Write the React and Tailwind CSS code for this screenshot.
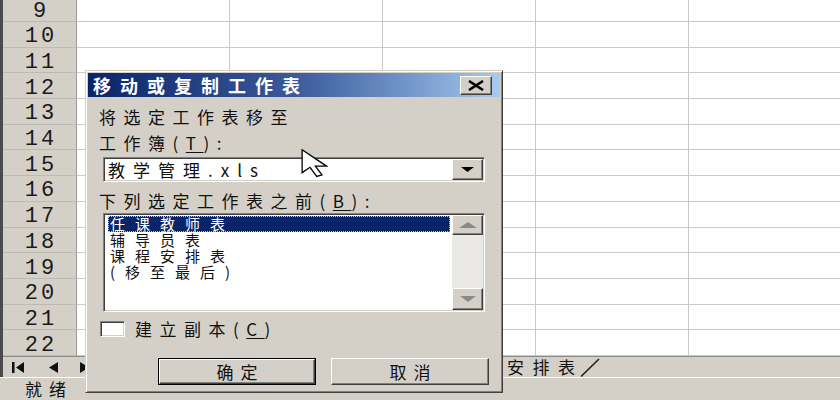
import React from 'react';

const rows = [9, 10, 11, 12, 13, 14, 15, 16, 17, 18, 19, 20, 21, 22];
const listItems = ['任课教师表', '辅导员表', '课程安排表', '(移至最后)'];

// raised / sunken win2000 edges
const raised = 'border border-t-white border-l-white border-r-[#404040] border-b-[#404040] shadow-[inset_-1px_-1px_0_#808080] bg-[#d4d0c8]';
const sunken = 'border border-t-[#808080] border-l-[#808080] border-r-white border-b-white shadow-[inset_1px_1px_0_#404040,inset_-1px_-1px_0_#d4d0c8]';

export default function App() {
  return (
    <div className="relative w-[840px] h-[400px] overflow-hidden bg-white text-black font-['Noto_Sans_CJK_SC',sans-serif]">
      <div className="flex flex-col border-l-[3px] border-[#4b4b4b]">
        {/* sheet grid */}
        <div className="h-[356px] overflow-hidden">
          <div className="flex flex-col mt-[-3.7px]">
            {rows.map((n) => (
              <div key={n} className="flex h-[25.7px] shrink-0">
                <div className="w-[74px] shrink-0 bg-[#d4d0c8] border-r border-b border-r-[#9c9a94] border-b-[#bdbab4] flex items-center justify-center pt-[6px] pl-[3px] font-['Liberation_Mono',monospace] text-[22px] leading-[20px] tracking-[3px] text-[#1a1a1a]">
                  {n}
                </div>
                <div className="w-[153px] shrink-0 border-r border-b border-[#cacaca]" />
                <div className="w-[153px] shrink-0 border-r border-b border-[#cacaca]" />
                <div className="w-[153px] shrink-0 border-r border-b border-[#cacaca]" />
                <div className="w-[153px] shrink-0 border-r border-b border-[#cacaca]" />
                <div className="flex-1 border-b border-[#cacaca]" />
              </div>
            ))}
          </div>
        </div>

        {/* sheet tabs */}
        <div className="h-[21px] bg-[#d4d0c8] border-t border-[#8a8a8a] flex items-center">
          <div className="w-[100px] shrink-0 flex items-center">
            <svg className="ml-[9px]" width="13" height="11" viewBox="0 0 13 11">
              <rect x="0" y="0" width="2.5" height="11" fill="#111" />
              <polygon points="12,0 12,11 4,5.5" fill="#111" />
            </svg>
            <svg className="ml-[23px]" width="10" height="11" viewBox="0 0 10 11">
              <polygon points="10,0 10,11 1,5.5" fill="#111" />
            </svg>
            <svg className="ml-[22px]" width="10" height="11" viewBox="0 0 10 11">
              <polygon points="0,0 0,11 9,5.5" fill="#111" />
            </svg>
          </div>
          <div className="w-[180px] shrink-0 text-[17px] leading-[18px] tracking-[8px]">任课教师表</div>
          <div className="w-[165px] shrink-0 text-[17px] leading-[18px] tracking-[8px]">辅导员表</div>
          <div className="flex items-center pl-[8px] text-[17px] leading-[18px] tracking-[8.5px] text-[#111]">
            课程安排表
            <svg className="ml-[-4px]" width="20" height="19" viewBox="0 0 20 19">
              <line x1="1" y1="18.5" x2="19" y2="1" stroke="#222" strokeWidth="1.6" />
            </svg>
          </div>
        </div>
      </div>

      {/* status bar */}
      <div className="h-[23px] bg-[#d4d0c8] border-t border-white flex items-center">
        <span className="ml-[25px] text-[17px] leading-[20px] tracking-[7px] text-[#111]">就绪</span>
      </div>

      {/* move or copy dialog */}
      <div className="absolute left-[85px] top-[70px] w-[418px] h-[323px] p-[2px] bg-[#d4d0c8] border border-t-[#d4d0c8] border-l-[#d4d0c8] border-r-[#404040] border-b-[#404040] shadow-[inset_1px_1px_0_#fff,inset_-1px_-1px_0_#808080] flex flex-col">
        <div className="h-[24px] shrink-0 flex items-center justify-between pl-[5px] bg-gradient-to-r from-[#0a246a] via-[#3a5a9a] to-[#a6caf0]">
          <span className="text-white font-bold text-[18px] leading-[20px] tracking-[9px]">移动或复制工作表</span>
          <div className={`w-[32px] h-[19px] mr-[8px] flex items-center justify-center ${raised}`}>
            <svg width="18" height="11" viewBox="0 0 18 11">
              <line x1="2" y1="1" x2="16" y2="10" stroke="#000" strokeWidth="2.6" />
              <line x1="16" y1="1" x2="2" y2="10" stroke="#000" strokeWidth="2.6" />
            </svg>
          </div>
        </div>

        <div className="flex flex-col pl-[11px] pr-[11px] text-[17px] text-[#111]">
          <div className="mt-[10px] h-[20px] leading-[20px] tracking-[7.5px]">将选定工作表移至</div>
          <div className="mt-[6px] h-[20px] leading-[20px] tracking-[7.5px]">
            工作簿(<span className="underline underline-offset-2">T</span>):
          </div>

          <div className={`ml-[4px] mt-[4px] w-[382px] h-[25px] bg-white flex items-center justify-between p-[1px] ${sunken}`}>
            <span className="pl-[3px] leading-[20px] tracking-[8px]">教学管理.xls</span>
            <div className={`w-[31px] h-[21px] flex items-center justify-center ${raised}`}>
              <svg width="13" height="5" viewBox="0 0 13 5">
                <polygon points="0,0 13,0 6.5,5" fill="#000" />
              </svg>
            </div>
          </div>

          <div className="mt-[9px] h-[20px] leading-[20px] tracking-[7.5px]">
            下列选定工作表之前(<span className="underline underline-offset-2">B</span>):
          </div>

          <div className={`ml-[4px] mt-[2px] w-[382px] h-[99px] bg-white flex p-[1px] ${sunken}`}>
            <div className="flex-1 flex flex-col pt-[1px] pl-[3px] pr-[2px]">
              {listItems.map((item, i) => (
                <div
                  key={item}
                  className={
                    i === 0
                      ? 'h-[16px] pl-[2px] text-[15px] leading-[16px] tracking-[10px] bg-[#0a246a] text-white outline-1 outline-dotted outline-[#c8c8a0] outline-offset-[-1px]'
                      : 'h-[16px] pl-[2px] text-[15px] leading-[16px] tracking-[10px]'
                  }
                >
                  {item}
                </div>
              ))}
            </div>
            <div className="w-[31px] flex flex-col">
              <div className={`h-[20px] flex items-center justify-center ${raised}`}>
                <svg width="18" height="6" viewBox="0 0 18 6">
                  <polygon points="0,6 18,6 9,0" fill="#8a8a8a" />
                </svg>
              </div>
              <div className="flex-1 bg-[#ebe9e5]" />
              <div className={`h-[22px] flex items-center justify-center ${raised}`}>
                <svg width="16" height="6" viewBox="0 0 16 6">
                  <polygon points="0,0 16,0 8,6" fill="#8a8a8a" />
                </svg>
              </div>
            </div>
          </div>

          <div className="mt-[9px] h-[16px] flex items-center pl-[1px]">
            <div className={`w-[25px] h-[16px] bg-white ${sunken}`} />
            <span className="ml-[10px] leading-[18px] tracking-[7.5px]">
              建立副本(<span className="underline underline-offset-2">C</span>)
            </span>
          </div>

          <div className="mt-[21px] flex justify-end gap-[15px]">
            <div className="w-[158px] h-[27px] border border-black">
              <div className="w-full h-full border border-t-white border-l-white border-r-[#404040] border-b-[#404040] shadow-[inset_-1px_-1px_0_#808080] flex items-center justify-center pl-[7px] leading-[20px] tracking-[7px]">
                确定
              </div>
            </div>
            <div className={`w-[158px] h-[27px] flex items-center justify-center pl-[7px] leading-[20px] tracking-[7px] ${raised}`}>
              取消
            </div>
          </div>
        </div>
      </div>

      {/* mouse pointer */}
      <svg className="absolute left-[301px] top-[149px]" width="27" height="29" viewBox="0 0 12 19" preserveAspectRatio="none">
        <path
          d="M0.5 0.5 L0.5 15.5 L4 12 L7 18 L9.3 17 L6.4 11.2 L11.3 11.2 Z"
          fill="#fff"
          stroke="#000"
          strokeWidth="1.3"
          vectorEffect="non-scaling-stroke"
          strokeLinejoin="miter"
        />
      </svg>
    </div>
  );
}
